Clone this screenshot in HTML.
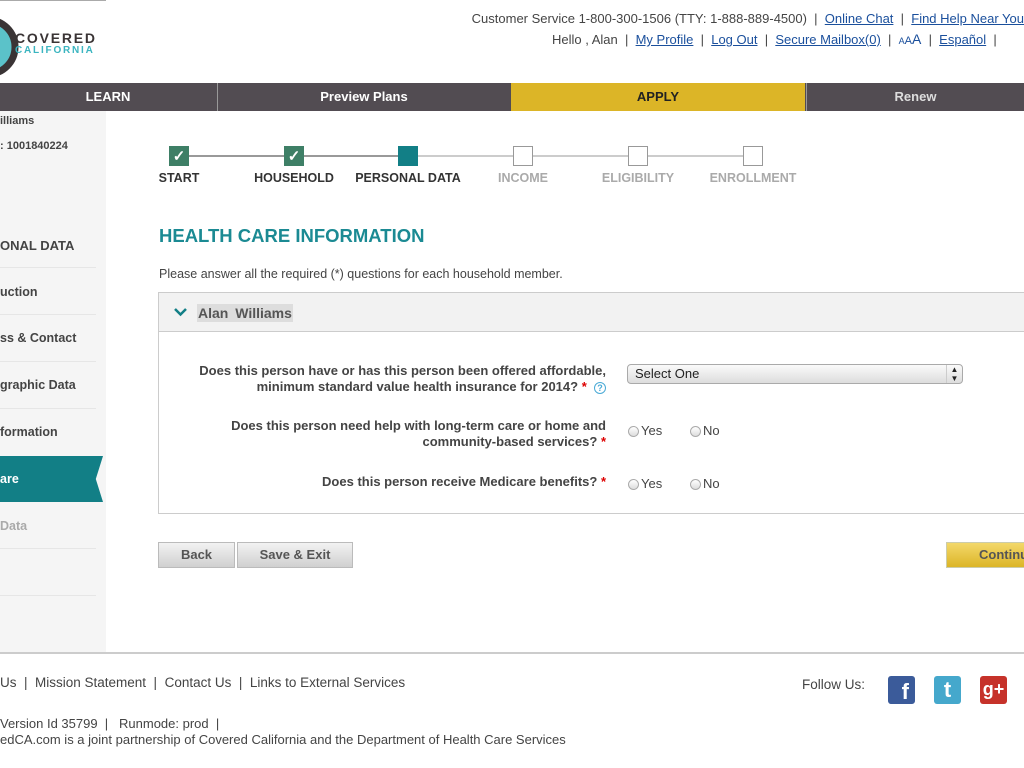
<!DOCTYPE html>
<html><head><meta charset="utf-8"><style>
*{margin:0;padding:0;box-sizing:border-box}
body{width:1024px;height:768px;overflow:hidden;background:#fff;font-family:"Liberation Sans",Arial,sans-serif;color:#444;position:relative}
.a{position:absolute}
a{color:#1a4f9c;text-decoration:underline}
.nav div{position:absolute;top:0;height:28px;line-height:28px;text-align:center;color:#fff;font-weight:bold;font-size:13px}
.side{left:0;top:111px;width:106px;height:541px;background:#f5f5f5}
.si{position:absolute;left:0;width:96px;font-size:12.5px;font-weight:bold;color:#444;white-space:nowrap}
.sep{position:absolute;left:0;width:96px;height:1px;background:#e6e6e6}
.box{position:absolute;top:146px;width:20px;height:20px;border:1px solid #999;background:#fff}
.done{background:#3e7f66;border-color:#3e7f66;color:#fff;text-align:center;font-size:15px;line-height:19px;font-weight:bold}
.lbl{position:absolute;top:171px;font-size:12.5px;font-weight:bold;color:#333;white-space:nowrap;transform:translateX(-50%)}
.q{position:absolute;right:418px;text-align:right;font-size:13px;font-weight:bold;color:#444;line-height:16px;white-space:nowrap}
.st{color:#d00}
.r{position:absolute;font-size:13px;color:#444}
.r i{display:inline-block;width:11px;height:11px;border:1px solid #aaa;border-radius:50%;background:linear-gradient(#fff,#ddd);vertical-align:-2px;margin-right:2px}
.btn{position:absolute;top:542px;height:26px;border:1px solid #bbb;background:linear-gradient(#f2f2f2,#d0d0d0);font-size:13px;font-weight:bold;color:#555;text-align:center;line-height:24px}
.f{font-size:13.5px;color:#444;white-space:nowrap}
</style></head><body>
<div class="a" style="left:0;top:0;width:106px;height:1px;background:#aaa"></div>
<svg class="a" style="left:0;top:16px" width="20" height="62"><circle cx="-12" cy="31" r="27" fill="#5bc2c9" stroke="#3a3435" stroke-width="7"/></svg>
<div class="a" style="left:15px;top:30px;font-size:14px;font-weight:bold;letter-spacing:1.8px;color:#3a3435">COVERED</div>
<div class="a" style="left:15px;top:45px;font-size:10px;font-weight:bold;letter-spacing:1.8px;color:#3bb5c0">CALIFORNIA</div>
<div class="a f" style="right:0;top:11px;font-size:13px;color:#444">Customer Service 1-800-300-1506 (TTY: 1-888-889-4500) &nbsp;| &nbsp;<a>Online Chat</a> &nbsp;| &nbsp;<a>Find Help Near You</a></div>
<div class="a f" style="left:552px;top:31px;font-size:13px">Hello , Alan &nbsp;| &nbsp;<a>My Profile</a> &nbsp;| &nbsp;<a>Log Out</a> &nbsp;| &nbsp;<a>Secure Mailbox(0)</a> &nbsp;| &nbsp;<span style="font-size:9px;color:#1a4f9c">A</span><span style="font-size:11px;color:#1a4f9c">A</span><span style="font-size:14px;color:#1a4f9c">A</span> &nbsp;| &nbsp;<a>Español</a> &nbsp;| &nbsp;</div>
<div class="a nav" style="left:0;top:83px;width:1024px;height:28px;background:#524c52">
<div style="left:0;width:216px">LEARN</div>
<div style="left:217px;width:293px;border-left:1px solid #999">Preview Plans</div>
<div style="left:511px;width:294px;background:#dcb527;color:#222">APPLY</div>
<div style="left:806px;width:218px;border-left:1px solid #999;color:#ddd">Renew</div>
</div>
<div class="a side">
<div class="si" style="top:4px;font-size:11px">illiams</div>
<div class="si" style="top:29px;font-size:11px">: 1001840224</div>
<div class="si" style="top:127px;font-size:13px">ONAL DATA</div>
<div class="sep" style="top:156px"></div>
<div class="si" style="top:174px">uction</div>
<div class="sep" style="top:203px"></div>
<div class="si" style="top:220px">ss &amp; Contact</div>
<div class="sep" style="top:250px"></div>
<div class="si" style="top:267px">graphic Data</div>
<div class="sep" style="top:297px"></div>
<div class="si" style="top:314px">formation</div>
<div class="a" style="left:0;top:345px;width:103px;height:46px;background:#127f86;clip-path:polygon(0 0,100% 0,93% 50%,100% 100%,0 100%)"></div>
<div class="si" style="top:361px;color:#fff">are</div>
<div class="si" style="top:408px;color:#aaa">Data</div>
<div class="sep" style="top:437px"></div>
<div class="sep" style="top:484px"></div>
</div>
<div class="a" style="left:179px;top:155px;width:574px;height:2px;background:#999"></div>
<div class="a" style="left:408px;top:155px;width:345px;height:2px;background:#ccc"></div>
<div class="box done" style="left:169px">✓</div>
<div class="box done" style="left:284px">✓</div>
<div class="box" style="left:398px;background:#127f86;border-color:#127f86"></div>
<div class="box" style="left:513px"></div>
<div class="box" style="left:628px"></div>
<div class="box" style="left:743px"></div>
<div class="lbl" style="left:179px">START</div>
<div class="lbl" style="left:294px">HOUSEHOLD</div>
<div class="lbl" style="left:408px">PERSONAL DATA</div>
<div class="lbl" style="left:523px;color:#aaa">INCOME</div>
<div class="lbl" style="left:638px;color:#aaa">ELIGIBILITY</div>
<div class="lbl" style="left:753px;color:#aaa">ENROLLMENT</div>
<div class="a" style="left:159px;top:225px;font-size:18.5px;font-weight:bold;color:#1b8a93">HEALTH CARE INFORMATION</div>
<div class="a" style="left:159px;top:267px;font-size:12.5px;color:#444">Please answer all the required (*) questions for each household member.</div>
<div class="a" style="left:158px;top:292px;width:880px;height:222px;border:1px solid #ccc"></div>
<div class="a" style="left:159px;top:293px;width:870px;height:39px;background:#f2f2f2;border-bottom:1px solid #ccc"></div>
<svg class="a" style="left:174px;top:307px" width="13" height="10"><path d="M1 2 L6.5 7.5 L12 2" stroke="#127f86" stroke-width="2.5" fill="none"/></svg>
<div class="a" style="left:197px;top:304px;height:18px;padding:0 1px;background:#ddd;font-size:14px;font-weight:bold;color:#555;line-height:18px;word-spacing:3px">Alan Williams</div>
<div class="q" style="top:363px">Does this person have or has this person been offered affordable,<br>minimum standard value health insurance for 2014? <span class="st">*</span> &nbsp;<span style="display:inline-block;width:12px;height:12px;border:1px solid #4aaad6;border-radius:50%;color:#4aaad6;font-size:9px;line-height:10px;text-align:center">?</span></div>
<div class="a" style="left:627px;top:364px;width:336px;height:20px;border:1px solid #aaa;border-radius:4px;background:linear-gradient(#fafafa,#ddd);font-size:13px;line-height:18px;padding-left:7px;color:#222">Select One<span style="position:absolute;right:0;top:0;width:16px;height:18px;border-left:1px solid #ccc;font-size:8px;line-height:9px;text-align:center">▲<br>▼</span></div>
<div class="q" style="top:418px">Does this person need help with long-term care or home and<br>community-based services? <span class="st">*</span></div>
<div class="r" style="left:628px;top:423px"><i></i>Yes</div><div class="r" style="left:690px;top:423px"><i></i>No</div>
<div class="q" style="top:474px">Does this person receive Medicare benefits? <span class="st">*</span></div>
<div class="r" style="left:628px;top:476px"><i></i>Yes</div><div class="r" style="left:690px;top:476px"><i></i>No</div>
<div class="btn" style="left:158px;width:77px">Back</div>
<div class="btn" style="left:237px;width:116px">Save &amp; Exit</div>
<div class="btn" style="left:946px;width:100px;background:linear-gradient(#f3d86a,#dcb527);border-color:#cca;text-align:left;padding-left:32px;color:#555">Continue</div>
<div class="a" style="left:0;top:652px;width:1024px;height:2px;background:#ccc"></div>
<div class="a f" style="left:0;top:675px">Us &nbsp;| &nbsp;Mission Statement &nbsp;| &nbsp;Contact Us &nbsp;| &nbsp;Links to External Services</div>
<div class="a f" style="left:0;top:716px;font-size:13px">Version Id 35799 &nbsp;| &nbsp; Runmode: prod &nbsp;|</div>
<div class="a f" style="left:0;top:732px;font-size:13px">edCA.com is a joint partnership of Covered California and the Department of Health Care Services</div>
<div class="a f" style="left:802px;top:677px">Follow Us:</div>
<div class="a" style="left:888px;top:676px;width:27px;height:28px;background:#3b5b9a;border-radius:3px;color:#fff;font-weight:bold;font-size:22px;text-align:right;padding-right:6px;line-height:32px">f</div>
<div class="a" style="left:934px;top:676px;width:27px;height:28px;background:#45a8cc;border-radius:3px;color:#fff;font-weight:bold;font-size:22px;text-align:center;line-height:28px">t</div>
<div class="a" style="left:980px;top:676px;width:27px;height:28px;background:#c6322a;border-radius:3px;color:#fff;font-weight:bold;font-size:18px;text-align:center;line-height:26px">g+</div>
</body></html>
